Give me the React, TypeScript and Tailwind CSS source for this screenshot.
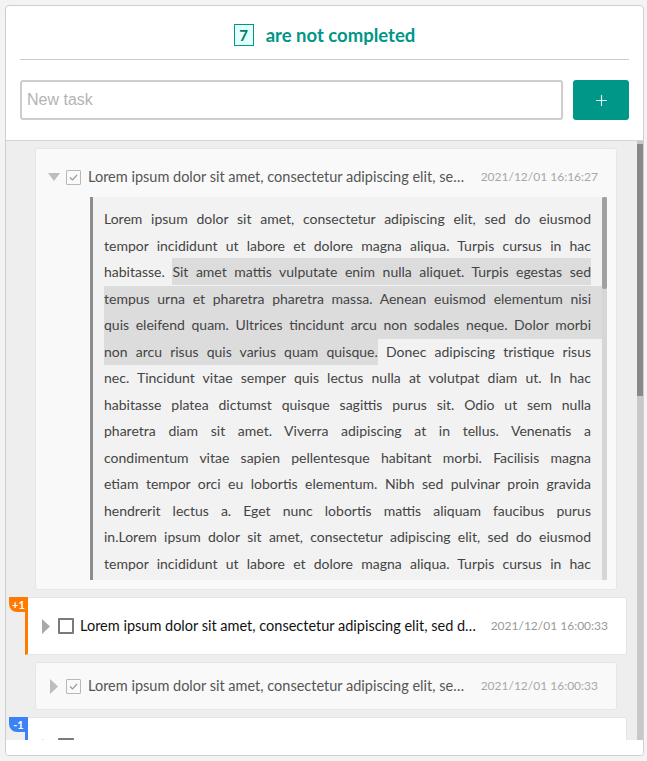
import React from "react";
import { Plus } from "lucide-react";

const font = { fontFamily: "Lato, 'Open Sans', sans-serif" };

// body lines of the expanded task, split the way the reference wraps them
const lines: { pre?: string; mark?: string; post?: string; full?: boolean }[] = [
  { pre: "Lorem ipsum dolor sit amet, consectetur adipiscing elit, sed do eiusmod" },
  { pre: "tempor incididunt ut labore et dolore magna aliqua. Turpis cursus in hac" },
  { pre: "habitasse. ", mark: "Sit amet mattis vulputate enim nulla aliquet. Turpis egestas sed" },
  { mark: "tempus urna et pharetra pharetra massa. Aenean euismod elementum nisi", full: true },
  { mark: "quis eleifend quam. Ultrices tincidunt arcu non sodales neque. Dolor morbi", full: true },
  { mark: "non arcu risus quis varius quam quisque.", post: " Donec adipiscing tristique risus" },
  { pre: "nec. Tincidunt vitae semper quis lectus nulla at volutpat diam ut. In hac" },
  { pre: "habitasse platea dictumst quisque sagittis purus sit. Odio ut sem nulla" },
  { pre: "pharetra diam sit amet. Viverra adipiscing at in tellus. Venenatis a" },
  { pre: "condimentum vitae sapien pellentesque habitant morbi. Facilisis magna" },
  { pre: "etiam tempor orci eu lobortis elementum. Nibh sed pulvinar proin gravida" },
  { pre: "hendrerit lectus a. Eget nunc lobortis mattis aliquam faucibus purus" },
  { pre: "in.Lorem ipsum dolor sit amet, consectetur adipiscing elit, sed do eiusmod" },
  { pre: "tempor incididunt ut labore et dolore magna aliqua. Turpis cursus in hac" },
  { pre: "habitasse. Sit amet mattis vulputate enim nulla aliquet. Turpis egestas sed" },
];

const TITLE = "Lorem ipsum dolor sit amet, consectetur adipiscing elit, sed do eiusmod tempor incididunt";

function Caret({ open, done }: { open?: boolean; done?: boolean }) {
  const c = done ? "#bdbdbd" : "#a8a8a8";
  return (
    <div className="w-[12px] flex items-center justify-center shrink-0">
      {open ? (
        <svg width="12" height="8" viewBox="0 0 12 8">
          <path d="M0 0 L12 0 L6 8 Z" fill={c} />
        </svg>
      ) : (
        <svg width="8" height="15" viewBox="0 0 8 15">
          <path d="M0 0 L8 7.5 L0 15 Z" fill={c} />
        </svg>
      )}
    </div>
  );
}

function Check({ done }: { done?: boolean }) {
  return (
    <div className="w-[16px] flex items-center ml-[6px] shrink-0">
      {done ? (
        <div className="w-[15px] h-[15px] border border-[#b8b8b8] bg-[#fafafa] rounded-[1px] flex items-center justify-center">
          <svg width="9" height="7" viewBox="0 0 9 7">
            <path d="M1 3.5 L3.5 6 L8 1" fill="none" stroke="#9a9a9a" strokeWidth="1.2" />
          </svg>
        </div>
      ) : (
        <div className="w-[16px] h-[16px] border-2 border-[#7a7a7a] bg-white rounded-[1px]" />
      )}
    </div>
  );
}

function Row({ open, done, date }: { open?: boolean; done?: boolean; date: string }) {
  return (
    <div className="h-[20px] flex items-center pl-[12px] pr-[18px]">
      <Caret open={open} done={done} />
      <Check done={done} />
      <div className={`ml-[6px] flex-1 min-w-0 truncate text-[14.5px] leading-[20px] ${done ? "text-[#555]" : "text-[#111]"}`}>
        {TITLE}
      </div>
      <div className={`ml-[12px] shrink-0 text-[12px] leading-[20px] ${done ? "text-[#a8a8a8]" : "text-[#999]"}`}>{date}</div>
    </div>
  );
}

function Badge({ label, color }: { label: string; color: string }) {
  return (
    <div
      className={`absolute left-[-19px] top-[-1px] w-[19px] h-[15px] rounded-bl-[8px] text-white text-[11px] font-bold leading-[15px] text-center ${color}`}
    >
      {label}
    </div>
  );
}

export default function App() {
  return (
    <div className="w-[647px] h-[761px] bg-[#f3f3f3] pt-[5px] pl-[5px]" style={font}>
      <div className="w-[639px] h-[751px] bg-white border border-[#cfcfcf] rounded-[4px] flex flex-col overflow-hidden">
        {/* header */}
        <div className="px-[14px] pt-[18px] pb-[20px] border-b border-[#d4d4d4]">
          <div className="h-[22px] flex items-center justify-center gap-[12px]">
            <div className="w-[20px] h-[22px] border border-[#009688] bg-[#e3fffb] text-[#00796b] font-bold text-[15px] flex items-center justify-center">
              7
            </div>
            <div className="text-[#009688] font-bold text-[18.5px] leading-[22px]">are not completed</div>
          </div>
          <div className="mt-[13px] h-px bg-[#cccccc]" />
          <div className="mt-[20px] flex gap-[10px]">
            <input
              placeholder="New task"
              className="flex-1 h-[40px] border-2 border-[#cdcdcd] rounded-[3px] px-[5px] text-[16px] outline-none placeholder:text-[#b4b4b4]"
              style={{ fontFamily: "'Liberation Sans', Arial, sans-serif" }}
            />
            <button className="w-[56px] h-[40px] bg-[#009688] rounded-[3px] flex items-center justify-center">
              <Plus size={17} strokeWidth={1.6} color="#e6f4f2" />
            </button>
          </div>
        </div>

        {/* list */}
        <div className="h-[599px] flex bg-[#eeeeee]">
          <div className="flex-1 overflow-hidden pl-[19px] pr-[10px] pt-[7px] flex flex-col gap-[7px]">
            {/* expanded completed task */}
            <div className="mx-[10px] shrink-0 bg-[#f9f9f9] border border-[#e6e6e6] rounded-[3px] pt-[18px] pb-[9px]">
              <Row open done date="2021/12/01 16:16:27" />
              <div className="mt-[10px] ml-[54px] mr-[9px] h-[383px] flex bg-[#f2f2f2] border-l-[3px] border-[#8c8c8c] overflow-hidden">
                <div className="flex-1 pl-[11px] pt-[9px] text-[14px] leading-[26.5px] text-[#444]">
                  {lines.map((l, i) => (
                    <div
                      key={i}
                      className={`pr-[11px] ${l.full ? "bg-[#dcdcdc]" : ""}`}
                      style={{ textAlign: "justify", textAlignLast: "justify" }}
                    >
                      {l.pre}
                      {l.mark && !l.full && <span className="bg-[#dcdcdc] py-[5px]">{l.mark}</span>}
                      {l.mark && l.full && l.mark}
                      {l.post}
                    </div>
                  ))}
                </div>
                <div className="w-[5px] bg-[#d6d6d6] flex flex-col">
                  <div className="h-[92px] bg-[#a0a0a0] rounded-[2px]" />
                </div>
              </div>
            </div>

            {/* active task */}
            <div className="relative shrink-0 h-[58px] bg-white border border-[#e4e4e4] border-l-[3px] border-l-[#ff7a00] rounded-r-[3px] flex items-center">
              <Badge label="+1" color="bg-[#ff7a00]" />
              <div className="flex-1 min-w-0">
                <Row date="2021/12/01 16:00:33" />
              </div>
            </div>

            {/* completed task */}
            <div className="mx-[10px] shrink-0 h-[48px] bg-[#f9f9f9] border border-[#e6e6e6] rounded-[3px] flex items-center">
              <div className="flex-1 min-w-0">
                <Row done date="2021/12/01 16:00:33" />
              </div>
            </div>

            {/* active task, cut off */}
            <div className="relative shrink-0 h-[58px] bg-white border border-[#e4e4e4] border-l-[3px] border-l-[#3b82f6] rounded-r-[3px] flex items-center">
              <Badge label="-1" color="bg-[#3b82f6]" />
              <div className="flex-1 min-w-0">
                <Row date="2021/12/01 15:58:12" />
              </div>
            </div>
          </div>
          <div className="w-[6px] bg-[#c8c8c8] pt-[3px]">
            <div className="h-[252px] bg-[#888888]" />
          </div>
        </div>
        <div className="flex-1 bg-white" />
      </div>
    </div>
  );
}
